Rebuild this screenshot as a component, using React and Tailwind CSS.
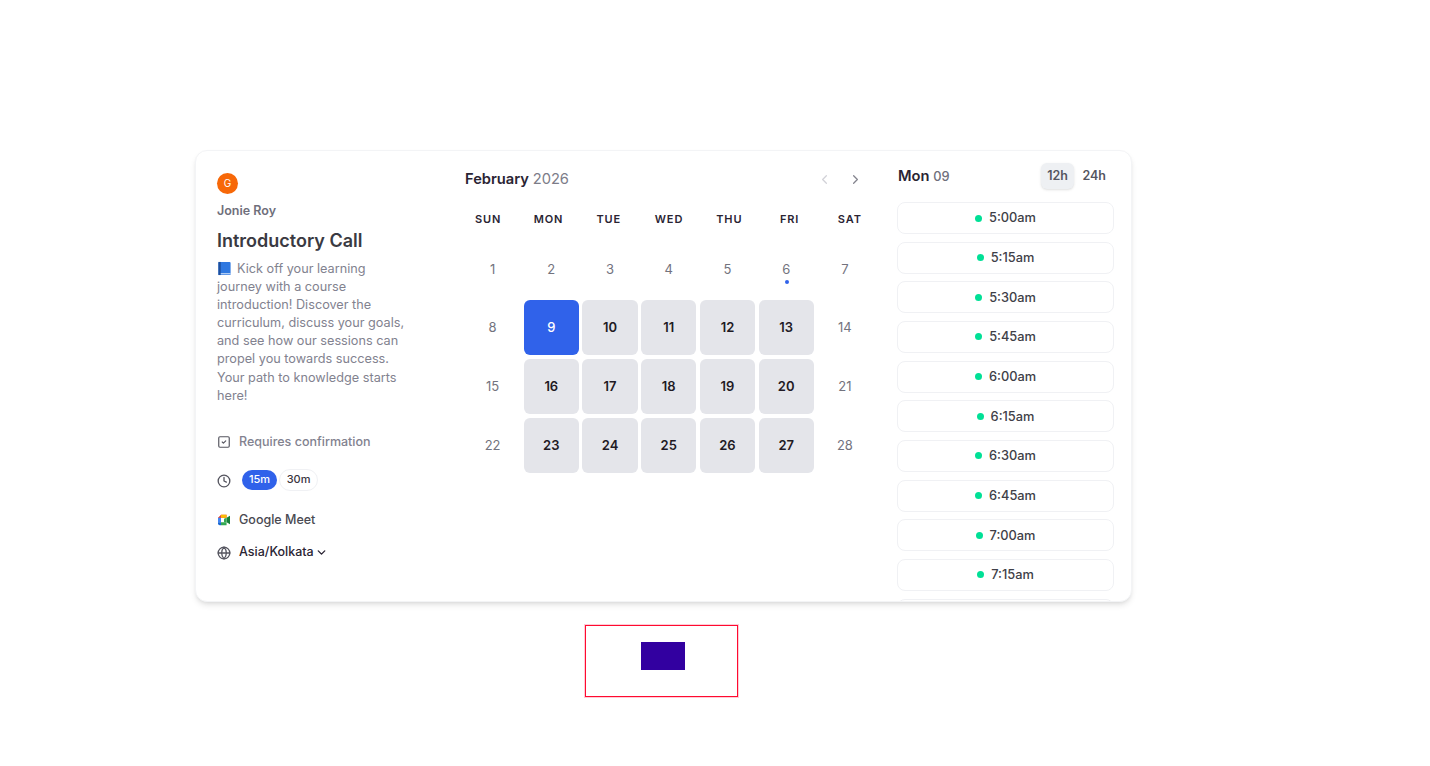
import { ChevronDown, ChevronLeft, ChevronRight, Clock, Globe, SquareCheck } from "lucide-react";

const WEEK = ["Sun", "Mon", "Tue", "Wed", "Thu", "Fri", "Sat"];
const DAYS = Array.from({ length: 28 }, (_, i) => i + 1);
const OPEN = [9, 10, 11, 12, 13, 16, 17, 18, 19, 20, 23, 24, 25, 26, 27];
const SLOTS = ["5:00am", "5:15am", "5:30am", "5:45am", "6:00am", "6:15am", "6:30am", "6:45am", "7:00am", "7:15am"];

const BookIcon = () => (
    <svg viewBox="0 0 16 16" className="inline-block w-[15px] h-[15px] align-[-3px] mr-[5px]">
        <rect x="1.5" y="1" width="13" height="14" rx="1" fill="#2f78e0" />
        <rect x="1.5" y="1" width="2.5" height="14" fill="#1d4f9e" />
        <rect x="4" y="13" width="10.5" height="1.2" fill="#cfe0f5" />
    </svg>
);

const MeetIcon = () => (
    <svg viewBox="0 0 16 14" className="w-[14px] h-[12px]">
        <path d="M1 4.5 4.5 1H11v3.5H4.5V7H1z" fill="#ea4335" />
        <path d="M4.5 1H11v3.5H4.5z" fill="#fbbc04" />
        <path d="M1 4.5h3.5v5H1z" fill="#4285f4" />
        <path d="M1 9.5h3.5V13H3a2 2 0 0 1-2-2z" fill="#1967d2" />
        <path d="M4.5 9.5H11V13H4.5z" fill="#34a853" />
        <path d="M11 4.5 15 2v10l-4-2.5z" fill="#188038" />
        <path d="M8 5.5 11 4.5v5H8z" fill="#34a853" />
    </svg>
);

const Day = ({ day }) => {
    const base = "relative h-[55px] flex items-center justify-center rounded-md text-[13px]";
    if (day === 9) {
        return <div className={`${base} bg-[#3062ea] text-white font-medium`}>{day}</div>;
    }
    if (OPEN.includes(day)) {
        return <div className={`${base} bg-[#e4e5ea] text-[#1f1a24] font-semibold`}>{day}</div>;
    }
    return (
        <div className={`${base} text-[#73737e] ${day < 8 ? "pt-[2px]" : ""}`}>
            {day}
            {day === 6 && <span className="absolute left-[26px] top-[39px] w-[4px] h-[4px] rounded-full bg-[#3062ea]" />}
        </div>
    );
};

export default function App() {
    return (
        <div className="bg-white min-h-[766px] pt-[150px] pl-[195px] font-['Inter',sans-serif]">
            <div className="flex w-[937px] h-[452px] rounded-xl border border-[#f3f4f6] bg-white shadow-md overflow-hidden">
                <div className="w-[261px] shrink-0 pl-[21px] pt-[22px]">
                    <div className="w-[21px] h-[21px] rounded-full bg-[#f76808] text-white text-[10px] flex items-center justify-center">G</div>
                    <p className="mt-[9px] text-[12.5px] leading-[16px] font-semibold text-[#6f6f7b]">Jonie Roy</p>
                    <h2 className="mt-[10px] text-[18px] leading-[24px] font-semibold text-[#3a3a42]">Introductory Call</h2>
                    <p className="mt-[7px] w-[190px] text-[12.7px] leading-[18.1px] text-[#82828f]">
                        <BookIcon />Kick off your learning journey with a course introduction! Discover the curriculum, discuss your goals, and see how our sessions can propel you towards success. Your path to knowledge starts here!
                    </p>
                    <div className="mt-[28px] flex items-center gap-[8px] text-[12.5px] font-medium text-[#82828f]">
                        <SquareCheck className="w-[14px] h-[14px] text-[#55555f]" strokeWidth={2} />
                        <span>Requires confirmation</span>
                    </div>
                    <div className="mt-[17px] flex items-center">
                        <Clock className="w-[14px] h-[14px] mt-[2px] text-[#55555f]" strokeWidth={2.25} />
                        <span className="ml-[11px] h-[20px] px-[7px] rounded-full bg-[#3062ea] text-white text-[11px] font-medium flex items-center">15m</span>
                        <span className="ml-[2px] h-[22px] px-[6.5px] rounded-full border border-[#f0f1f4] text-[#3a3540] text-[11px] font-medium flex items-center">30m</span>
                    </div>
                    <div className="mt-[20px] flex items-center gap-[8px] text-[12.5px] font-medium text-[#4a4a52]">
                        <MeetIcon />
                        <span>Google Meet</span>
                    </div>
                    <div className="mt-[14px] flex items-center text-[12.5px] font-medium text-[#2a2433]">
                        <Globe className="w-[14px] h-[14px] text-[#55555f]" strokeWidth={2.25} />
                        <span className="ml-[8px]">Asia/Kolkata</span>
                        <ChevronDown className="w-[13px] h-[13px] ml-[1px]" strokeWidth={2.5} />
                    </div>
                </div>

                <div className="w-[422px] shrink-0">
                    <div className="mt-[16px] pl-[8px] pr-[16px] h-[24px] flex items-center justify-between">
                        <p className="text-[14.7px] font-semibold text-[#2a2433]">
                            February <span className="font-normal text-[#7c7c88]">2026</span>
                        </p>
                        <div className="flex items-center gap-[16px]">
                            <ChevronLeft className="w-[15px] h-[15px] text-[#d2d2d8]" />
                            <ChevronRight className="w-[15px] h-[15px] text-[#85858f]" />
                        </div>
                    </div>
                    <div className="mt-[20px] ml-[1px] -mr-[1px] grid grid-cols-7">
                        {WEEK.map((w) => (
                            <div key={w} className="text-center text-[11px] leading-[16px] font-semibold uppercase tracking-[0.08em] text-[#2a2433]">{w}</div>
                        ))}
                    </div>
                    <div className="mt-[14px] ml-[8px] mr-[6.5px] grid grid-cols-7 gap-x-[3.6px] gap-y-[4px]">
                        {DAYS.map((d) => (
                            <Day key={d} day={d} />
                        ))}
                    </div>
                </div>

                <div className="flex-1 min-w-0 pl-[18px] pr-[17px]">
                    <div className="mt-[12px] h-[26px] flex items-center justify-between">
                        <p className="pl-[1px] text-[14.7px] font-semibold text-[#2a2433]">
                            Mon <span className="text-[12.8px] font-medium text-[#6f6f7b]">09</span>
                        </p>
                        <div className="flex items-center text-[12.5px] font-semibold text-[#55555f]">
                            <span className="px-[6.5px] h-[26px] flex items-center rounded-md bg-[#eef0f3] shadow-sm">12h</span>
                            <span className="px-[8px]">24h</span>
                        </div>
                    </div>
                    <div className="mt-[13px] flex flex-col gap-[7.67px]">
                        {SLOTS.map((s) => (
                            <div key={s} className="h-[32px] shrink-0 rounded-lg border border-[#f0f1f4] flex items-center justify-center gap-[7px] text-[12.8px] font-medium text-[#3f3f48]">
                                <span className="w-[7px] h-[7px] rounded-full bg-[#00e096]" />
                                {s}
                            </div>
                        ))}
                        <div className="h-[32px] shrink-0 rounded-lg border border-[#f0f1f4]" />
                    </div>
                </div>
            </div>

            <div className="mt-[23px] ml-[390px] w-[153px] h-[72px] border border-[#ff0a30] shadow-[0_0_0_1px_rgba(255,0,50,0.2)] pl-[55px] pt-[16px]">
                <div className="w-[44px] h-[28px] bg-[#3200a0]" />
            </div>
        </div>
    );
}
